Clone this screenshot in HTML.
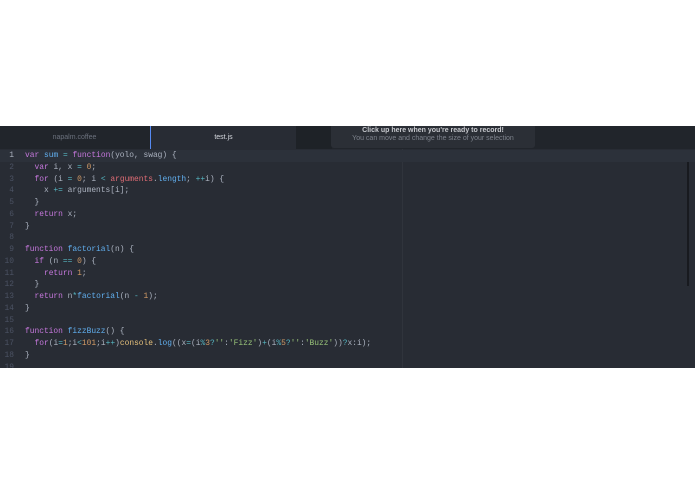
<!DOCTYPE html>
<html><head><style>
body{margin:0;width:695px;height:494px;background:#fff;position:relative;overflow:hidden;font-family:"Liberation Mono",monospace}
#ed{position:absolute;left:0;top:126px;width:695px;height:242px;background:#282c34;overflow:hidden}
#tabs{position:absolute;left:0;top:0;width:695px;height:23px;background:#21252b}
.tab{position:absolute;top:0;height:23px;line-height:24px;font-family:"Liberation Sans",sans-serif;font-size:7px;text-align:center;color:#6b717d}
#tip{position:absolute;left:331px;top:0;width:204px;height:22px;background:#2b2f36;border-radius:0 0 3px 3px;font-family:"Liberation Sans",sans-serif;text-align:center}
#code{position:absolute;left:0;top:24px;width:695px}
.l{height:11.76px;line-height:11.76px;font-size:7.9px;white-space:pre;position:relative;color:#abb2bf}
.l .n{position:absolute;left:0;width:14px;text-align:right;color:#4b5263}
.l .c{position:absolute;left:25px}
.cur{background:#2c313a}
.cur .n{color:#abb2bf}
.k{color:#c678dd}.f{color:#61afef}.o{color:#56b6c2}.d{color:#d19a66}.s{color:#98c379}.r{color:#e06c75}.y{color:#e5c07b}
</style></head><body>
<div id="ed">
<div id="tabs">
<div class="tab" style="left:0;width:149px">napalm.coffee</div>
<div class="tab" style="left:150px;width:145px;background:#282c34;color:#d7dae0;border-left:1px solid #568af2">test.js</div>
<div class="tab" style="left:296px;width:36px;background:#1e2227"></div>
<div id="tip"><div style="font-size:7px;font-weight:bold;color:#c8cacf;padding-top:1px">Click up here when you're ready to record!</div><div style="font-size:7px;color:#7c818b;margin-top:1px">You can move and change the size of your selection</div></div>
</div>
<div style="position:absolute;left:402px;top:23px;width:1px;height:219px;background:#30343c"></div>
<div style="position:absolute;left:687px;top:25px;width:2px;height:135px;background:#181a1f"></div>
<div id="code">
<div class="l cur"><span class="n">1</span><span class="c"><span class="k">var</span> <span class="f">sum</span> <span class="o">=</span> <span class="k">function</span>(yolo, swag) {</span></div>
<div class="l"><span class="n">2</span><span class="c">  <span class="k">var</span> i, x <span class="o">=</span> <span class="d">0</span>;</span></div>
<div class="l"><span class="n">3</span><span class="c">  <span class="k">for</span> (i <span class="o">=</span> <span class="d">0</span>; i <span class="o">&lt;</span> <span class="r">arguments</span>.<span class="f">length</span>; <span class="o">++</span>i) {</span></div>
<div class="l"><span class="n">4</span><span class="c">    x <span class="o">+=</span> arguments[i];</span></div>
<div class="l"><span class="n">5</span><span class="c">  }</span></div>
<div class="l"><span class="n">6</span><span class="c">  <span class="k">return</span> x;</span></div>
<div class="l"><span class="n">7</span><span class="c">}</span></div>
<div class="l"><span class="n">8</span><span class="c"></span></div>
<div class="l"><span class="n">9</span><span class="c"><span class="k">function</span> <span class="f">factorial</span>(n) {</span></div>
<div class="l"><span class="n">10</span><span class="c">  <span class="k">if</span> (n <span class="o">==</span> <span class="d">0</span>) {</span></div>
<div class="l"><span class="n">11</span><span class="c">    <span class="k">return</span> <span class="d">1</span>;</span></div>
<div class="l"><span class="n">12</span><span class="c">  }</span></div>
<div class="l"><span class="n">13</span><span class="c">  <span class="k">return</span> n<span class="o">*</span><span class="f">factorial</span>(n <span class="o">-</span> <span class="d">1</span>);</span></div>
<div class="l"><span class="n">14</span><span class="c">}</span></div>
<div class="l"><span class="n">15</span><span class="c"></span></div>
<div class="l"><span class="n">16</span><span class="c"><span class="k">function</span> <span class="f">fizzBuzz</span>() {</span></div>
<div class="l"><span class="n">17</span><span class="c">  <span class="k">for</span>(i<span class="o">=</span><span class="d">1</span>;i<span class="o">&lt;</span><span class="d">101</span>;i<span class="o">++</span>)<span class="y">console</span>.<span class="f">log</span>((x<span class="o">=</span>(i<span class="o">%</span><span class="d">3</span><span class="o">?</span><span class="s">''</span>:<span class="s">'Fizz'</span>)<span class="o">+</span>(i<span class="o">%</span><span class="d">5</span><span class="o">?</span><span class="s">''</span>:<span class="s">'Buzz'</span>))<span class="o">?</span>x:i);</span></div>
<div class="l"><span class="n">18</span><span class="c">}</span></div>
<div class="l"><span class="n">19</span><span class="c"></span></div>
</div>
</div>
</body></html>
